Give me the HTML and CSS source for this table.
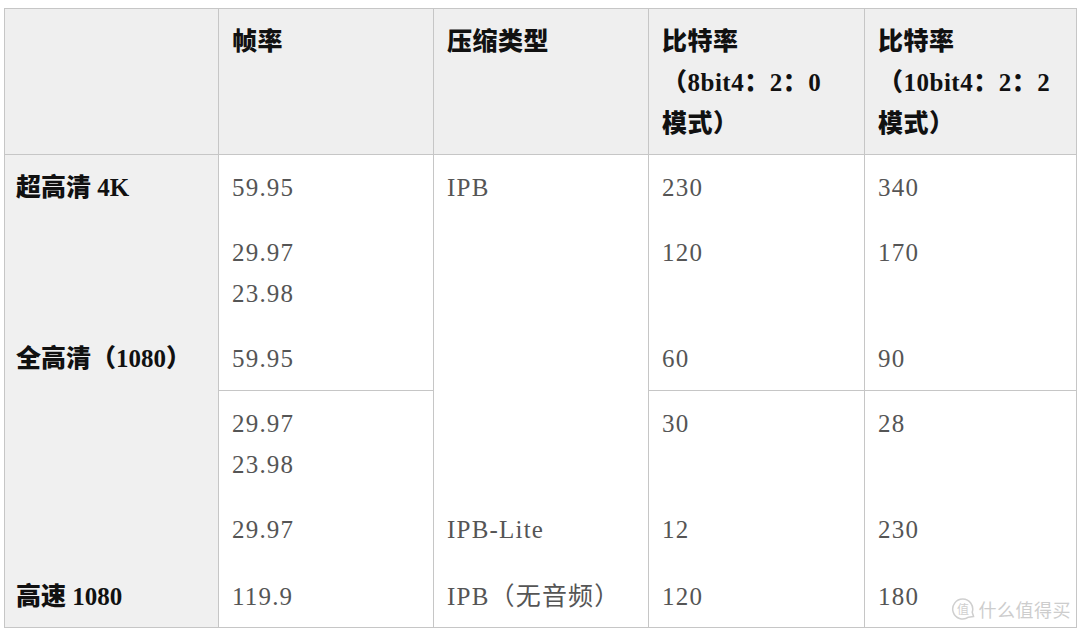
FILE: index.html
```html
<!DOCTYPE html>
<html lang="zh-CN">
<head>
<meta charset="utf-8">
<title>码率表</title>
<link rel="stylesheet" href="styles.css">
</head>
<body>
<div class="table">
  <div class="cell head first"></div>
  <div class="cell head">帧率</div>
  <div class="cell head">压缩类型</div>
  <div class="cell head">比特率<br>（8bit4：2：0<br>模式）</div>
  <div class="cell head">比特率<br>（10bit4：2：2<br>模式）</div>

  <div class="cell label top">超高清 4K</div>
  <div class="cell top">59.95</div>
  <div class="cell top span4">IPB</div>
  <div class="cell top">230</div>
  <div class="cell top">340</div>

  <div class="cell label"></div>
  <div class="cell">29.97<br>23.98</div>
  <div class="cell">120</div>
  <div class="cell">170</div>

  <div class="cell label">全高清（1080）</div>
  <div class="cell">59.95</div>
  <div class="cell">60</div>
  <div class="cell">90</div>

  <div class="cell label"></div>
  <div class="cell top">29.97<br>23.98</div>
  <div class="cell top">30</div>
  <div class="cell top">28</div>

  <div class="cell label"></div>
  <div class="cell">29.97</div>
  <div class="cell">IPB-Lite</div>
  <div class="cell">12</div>
  <div class="cell">230</div>

  <div class="cell label">高速 1080</div>
  <div class="cell">119.9</div>
  <div class="cell">IPB（无音频）</div>
  <div class="cell">120</div>
  <div class="cell">180</div>

  <div class="watermark">
    <svg class="wm-icon" width="24" height="24" viewBox="0 0 24 24">
      <path d="M17.5 20.2 A10 10 0 1 1 21.2 15.2 L22.6 19.6 Z" fill="none" stroke="#cfcfcf" stroke-width="1.5" stroke-linejoin="round"/>
      <text x="12" y="16.5" text-anchor="middle" class="wm-glyph">值</text>
    </svg>
    <span class="wm-text">什么值得买</span>
  </div>
</div>
</body>
</html>
```

FILE: styles.css
```css
html, body {
  margin: 0;
  padding: 0;
  background: #ffffff;
}

body {
  width: 1080px;
  height: 629px;
  overflow: hidden;
}

.table {
  position: relative;
  display: grid;
  grid-template-columns: 213px 215px 215px 216px 212px;
  grid-template-rows: 145px 66px 106px 64px 107px 67px 63px;
  width: max-content;
  margin: 8px 0 0 4px;
  border: 1px solid #c6c6c6;
  font-family: "Liberation Serif", "Noto Sans CJK SC", serif;
}

.cell {
  box-sizing: border-box;
  padding: 12px 8px 0 13px;
  border-left: 1px solid #c6c6c6;
  font-size: 25px;
  line-height: 41px;
  color: #555555;
  letter-spacing: 1.2px;
  background: #ffffff;
  white-space: nowrap;
}

.cell.top {
  border-top: 1px solid #c6c6c6;
}

.cell.span4 {
  grid-row: span 4;
}

.head {
  background: #efefef;
  color: #111111;
  font-weight: 900;
  letter-spacing: 0.5px;
}

.head.first,
.label {
  border-left: none;
}

.label {
  background: #f0f0f0;
  color: #111111;
  font-weight: 900;
  letter-spacing: 0;
  padding-left: 11px;
}

.watermark {
  position: absolute;
  right: 5px;
  bottom: 6px;
  display: flex;
  align-items: center;
  gap: 4px;
}

.wm-icon {
  display: block;
}

.wm-glyph {
  font-family: "Noto Sans CJK SC", sans-serif;
  font-size: 12px;
  fill: #cfcfcf;
}

.wm-text {
  font-family: "Noto Sans CJK SC", sans-serif;
  font-size: 18px;
  line-height: 22px;
  color: #cdcdcd;
  letter-spacing: 0.5px;
}
```
